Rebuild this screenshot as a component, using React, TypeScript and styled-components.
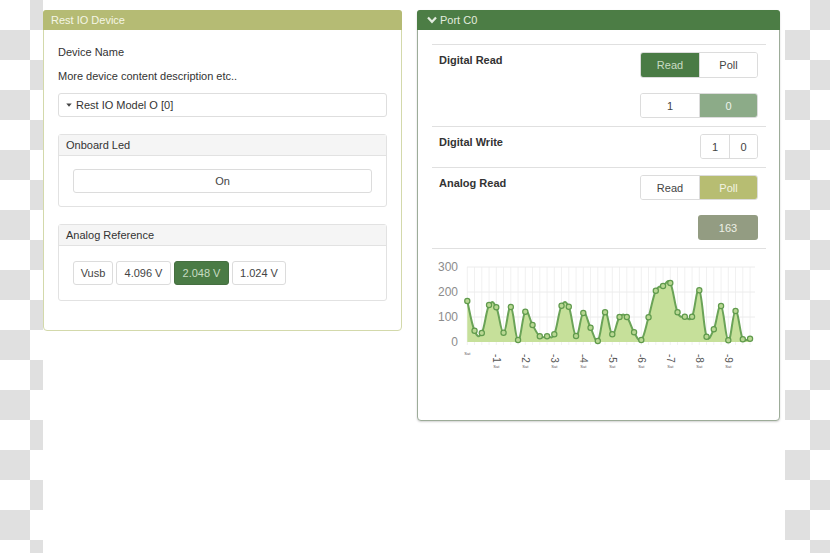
import React from 'react';
import styled, { createGlobalStyle } from 'styled-components';

const GlobalStyle = createGlobalStyle`
  html, body { margin: 0; padding: 0; }
  body {
    background: repeating-conic-gradient(#e0e0e0 0 25%, #ffffff 0 50%) 0 0 / 60px 60px;
    font-family: "Liberation Sans", Arial, sans-serif;
    font-size: 11px;
    color: #333;
  }
  * { box-sizing: border-box; }
`;

type Tone = 'olive' | 'green';

const Page = styled.div`
  margin-left: 43px;
  width: 742px;
  height: 553px;
  background: #fff;
  padding: 10px 5px 0 0;
  display: flex;
  align-items: flex-start;
  gap: 15px;
`;

const Panel = styled.section<{ $tone: Tone; $width: number }>`
  width: ${(p) => p.$width}px;
  border: 1px solid ${(p) => (p.$tone === 'olive' ? '#d3d9ab' : '#9dac99')};
  border-radius: 4px;
  background: #fff;
  box-shadow: ${(p) => (p.$tone === 'olive' ? 'none' : '0 1px 2px rgba(0,0,0,0.18)')};
`;

const PanelHeader = styled.header<{ $tone: Tone }>`
  margin: -1px -1px 0;
  height: 20px;
  background: ${(p) => (p.$tone === 'olive' ? '#b5bb74' : '#4c7d45')};
  color: ${(p) => (p.$tone === 'olive' ? '#f4f6e6' : '#e3ecdf')};
  border-radius: 3px 3px 0 0;
  display: flex;
  align-items: center;
  gap: 3px;
  padding: 0 ${(p) => (p.$tone === 'olive' ? '8px' : '10px')};
  font-size: 11px;
`;

const LeftBody = styled.div`
  display: flex;
  flex-direction: column;
  padding: 14px 14px 29px;
`;

const Text = styled.p<{ $gap?: number }>`
  margin: ${(p) => p.$gap ?? 0}px 0 0;
  line-height: 16px;
  font-size: 11px;
  color: #333;
`;

const Dropdown = styled.div`
  margin-top: 9px;
  height: 24px;
  border: 1px solid #dedede;
  border-radius: 3px;
  display: flex;
  align-items: center;
  gap: 4px;
  padding: 0 7px;
  color: #333;
`;

const SubPanel = styled.div<{ $gap: number }>`
  margin-top: ${(p) => p.$gap}px;
  border: 1px solid #e2e2e2;
  border-radius: 3px;
`;

const SubHeader = styled.div`
  height: 21px;
  background: #f5f5f5;
  border-bottom: 1px solid #e2e2e2;
  display: flex;
  align-items: center;
  padding: 0 7px;
  color: #333;
`;

const SubBody = styled.div<{ $top: number; $bottom: number }>`
  display: flex;
  gap: 3px;
  padding: ${(p) => p.$top}px 14px ${(p) => p.$bottom}px;
`;

const Btn = styled.button<{ $wide?: boolean; $width?: number; $active?: boolean }>`
  ${(p) => (p.$wide ? 'flex: 1;' : `width: ${p.$width}px;`)}
  height: 24px;
  border: 1px solid ${(p) => (p.$active ? '#466f41' : '#dcdcdc')};
  border-radius: 3px;
  background: ${(p) => (p.$active ? '#4a7b45' : '#fff')};
  color: ${(p) => (p.$active ? '#c8dcc3' : '#444')};
  font-family: inherit;
  font-size: 11px;
  padding: 0;
`;

const RightBody = styled.div`
  padding: 14px 13px 40px 14px;
`;

const Row = styled.div`
  border-top: 1px solid #e0e0e0;
  display: flex;
  justify-content: space-between;
  align-items: flex-start;
  padding: 7px 8px 8px 7px;
`;

const Label = styled.div`
  font-weight: bold;
  font-size: 11px;
  line-height: 16px;
  color: #333;
`;

const Controls = styled.div`
  display: flex;
  flex-direction: column;
  align-items: flex-end;
  gap: 15px;
`;

const Segmented = styled.div<{ $h: number }>`
  display: flex;
  height: ${(p) => p.$h}px;
  border: 1px solid #dcdcdc;
  border-radius: 3px;
  overflow: hidden;
`;

const Segment = styled.div<{ $w: number; $bg?: string; $fg?: string }>`
  width: ${(p) => p.$w}px;
  display: flex;
  align-items: center;
  justify-content: center;
  background: ${(p) => p.$bg ?? '#fff'};
  color: ${(p) => p.$fg ?? '#444'};
  font-size: 11px;
  & + & { border-left: 1px solid #dcdcdc; }
`;

const ValueBox = styled.div`
  width: 60px;
  height: 25px;
  border-radius: 3px;
  background: #939c82;
  color: #eef0e6;
  display: flex;
  align-items: center;
  justify-content: center;
  font-size: 11px;
`;

const ChartWrap = styled.div`
  border-top: 1px solid #e0e0e0;
  padding-top: 6px;
  svg { display: block; }
`;

const data = [
  164, 45, 36, 148, 139, 37, 140, 8, 121, 68, 23, 23, 31, 145, 141, 24, 116, 57, 4, 119, 31, 100, 100,
  39, 8, 99, 205, 224, 236, 119, 101, 101, 207, 21, 51, 144, 7, 124, 11, 13,
];

const X0 = 35.3;
const DX = 7.25;
const BASE = 87;
const px = (i: number) => X0 + i * DX;
const py = (v: number) => BASE - v * 0.25;
const FONT = 'Liberation Sans, Arial, sans-serif';

function buildPath(): string {
  const pts = data.map((v, i) => [px(i), py(v)]);
  const clamp = (y: number) => Math.min(BASE, Math.max(10, y));
  const t = 0.2;
  let d = `M${pts[0][0].toFixed(2)},${pts[0][1].toFixed(2)}`;
  for (let i = 0; i < pts.length - 1; i++) {
    const p0 = pts[Math.max(0, i - 1)];
    const p1 = pts[i];
    const p2 = pts[i + 1];
    const p3 = pts[Math.min(pts.length - 1, i + 2)];
    const c1x = p1[0] + (p2[0] - p0[0]) * t;
    const c1y = clamp(p1[1] + (p2[1] - p0[1]) * t);
    const c2x = p2[0] - (p3[0] - p1[0]) * t;
    const c2y = clamp(p2[1] - (p3[1] - p1[1]) * t);
    d += ` C${c1x.toFixed(2)},${c1y.toFixed(2)} ${c2x.toFixed(2)},${c2y.toFixed(2)} ${p2[0].toFixed(2)},${p2[1].toFixed(2)}`;
  }
  return d;
}

const Chart: React.FC = () => {
  const line = buildPath();
  const area = `${line} L${px(data.length - 1).toFixed(2)},${BASE} L${px(0).toFixed(2)},${BASE} Z`;
  return (
    <svg width="334" height="125" viewBox="0 0 334 125">
      {data.map((_, i) => (
        <line key={`v${i}`} x1={px(i)} y1={12} x2={px(i)} y2={90} stroke="#f1f1f1" strokeWidth="1" />
      ))}
      {[12, 37, 62].map((y) => (
        <line key={`h${y}`} x1={35} y1={y} x2={323} y2={y} stroke="#ececec" strokeWidth="1" />
      ))}
      {[
        ['300', 16],
        ['200', 41],
        ['100', 66],
        ['0', 91],
      ].map(([t, y]) => (
        <text key={t as string} x={26} y={y as number} textAnchor="end" fontSize="12" fill="#8c8c8c" fontFamily={FONT}>
          {t}
        </text>
      ))}
      <path d={area} fill="#c6e09a" />
      <path d={line} fill="none" stroke="#6aa357" strokeWidth="2" />
      {data.map((v, i) => (
        <circle key={`c${i}`} cx={px(i)} cy={py(v)} r="2.6" fill="#b8d792" stroke="#5f9a4c" strokeWidth="1.2" />
      ))}
      <text x={px(0)} y={100} textAnchor="middle" fontSize="4" fill="#555" fontFamily={FONT}>
        Sat
      </text>
      {[1, 2, 3, 4, 5, 6, 7, 8, 9].map((k) => {
        const x = px(k * 4);
        return (
          <g key={`x${k}`}>
            <text transform={`translate(${(x - 3.5).toFixed(2)},99) rotate(90)`} fontSize="10" fill="#555" fontFamily={FONT}>
              {`-${k}`}
            </text>
            <text x={x} y={113} textAnchor="middle" fontSize="4" fill="#555" fontFamily={FONT}>
              Sat
            </text>
          </g>
        );
      })}
    </svg>
  );
};

const Chevron = () => (
  <svg width="10" height="8" viewBox="0 0 10 8">
    <polyline points="1,1.5 5,5.8 9,1.5" fill="none" stroke="#e3ecdf" strokeWidth="2.2" />
  </svg>
);

const Caret = () => (
  <svg width="6" height="4" viewBox="0 0 6 4">
    <polygon points="0.3,0.5 5.7,0.5 3,3.7" fill="#444" />
  </svg>
);

export default function App() {
  return (
    <>
      <GlobalStyle />
      <Page>
        <Panel $tone="olive" $width={359}>
          <PanelHeader $tone="olive">Rest IO Device</PanelHeader>
          <LeftBody>
            <Text>Device Name</Text>
            <Text $gap={8}>More device content description etc..</Text>
            <Dropdown>
              <Caret />
              <span>Rest IO Model O [0]</span>
            </Dropdown>
            <SubPanel $gap={17}>
              <SubHeader>Onboard Led</SubHeader>
              <SubBody $top={13} $bottom={13}>
                <Btn $wide>On</Btn>
              </SubBody>
            </SubPanel>
            <SubPanel $gap={17}>
              <SubHeader>Analog Reference</SubHeader>
              <SubBody $top={15} $bottom={15}>
                <Btn $width={40}>Vusb</Btn>
                <Btn $width={55}>4.096 V</Btn>
                <Btn $width={55} $active>
                  2.048 V
                </Btn>
                <Btn $width={54}>1.024 V</Btn>
              </SubBody>
            </SubPanel>
          </LeftBody>
        </Panel>
        <Panel $tone="green" $width={363}>
          <PanelHeader $tone="green">
            <Chevron />
            <span>Port C0</span>
          </PanelHeader>
          <RightBody>
            <Row>
              <Label>Digital Read</Label>
              <Controls>
                <Segmented $h={26}>
                  <Segment $w={58} $bg="#4a7b45" $fg="#c9dcc4">
                    Read
                  </Segment>
                  <Segment $w={58}>Poll</Segment>
                </Segmented>
                <Segmented $h={25}>
                  <Segment $w={58}>1</Segment>
                  <Segment $w={58} $bg="#8cab88" $fg="#eef3ec">
                    0
                  </Segment>
                </Segmented>
              </Controls>
            </Row>
            <Row>
              <Label>Digital Write</Label>
              <Controls>
                <Segmented $h={25}>
                  <Segment $w={28}>1</Segment>
                  <Segment $w={28}>0</Segment>
                </Segmented>
              </Controls>
            </Row>
            <Row>
              <Label>Analog Read</Label>
              <Controls>
                <Segmented $h={25}>
                  <Segment $w={58}>Read</Segment>
                  <Segment $w={58} $bg="#b7bd72" $fg="#f3f4e3">
                    Poll
                  </Segment>
                </Segmented>
                <ValueBox>163</ValueBox>
              </Controls>
            </Row>
            <ChartWrap>
              <Chart />
            </ChartWrap>
          </RightBody>
        </Panel>
      </Page>
    </>
  );
}
